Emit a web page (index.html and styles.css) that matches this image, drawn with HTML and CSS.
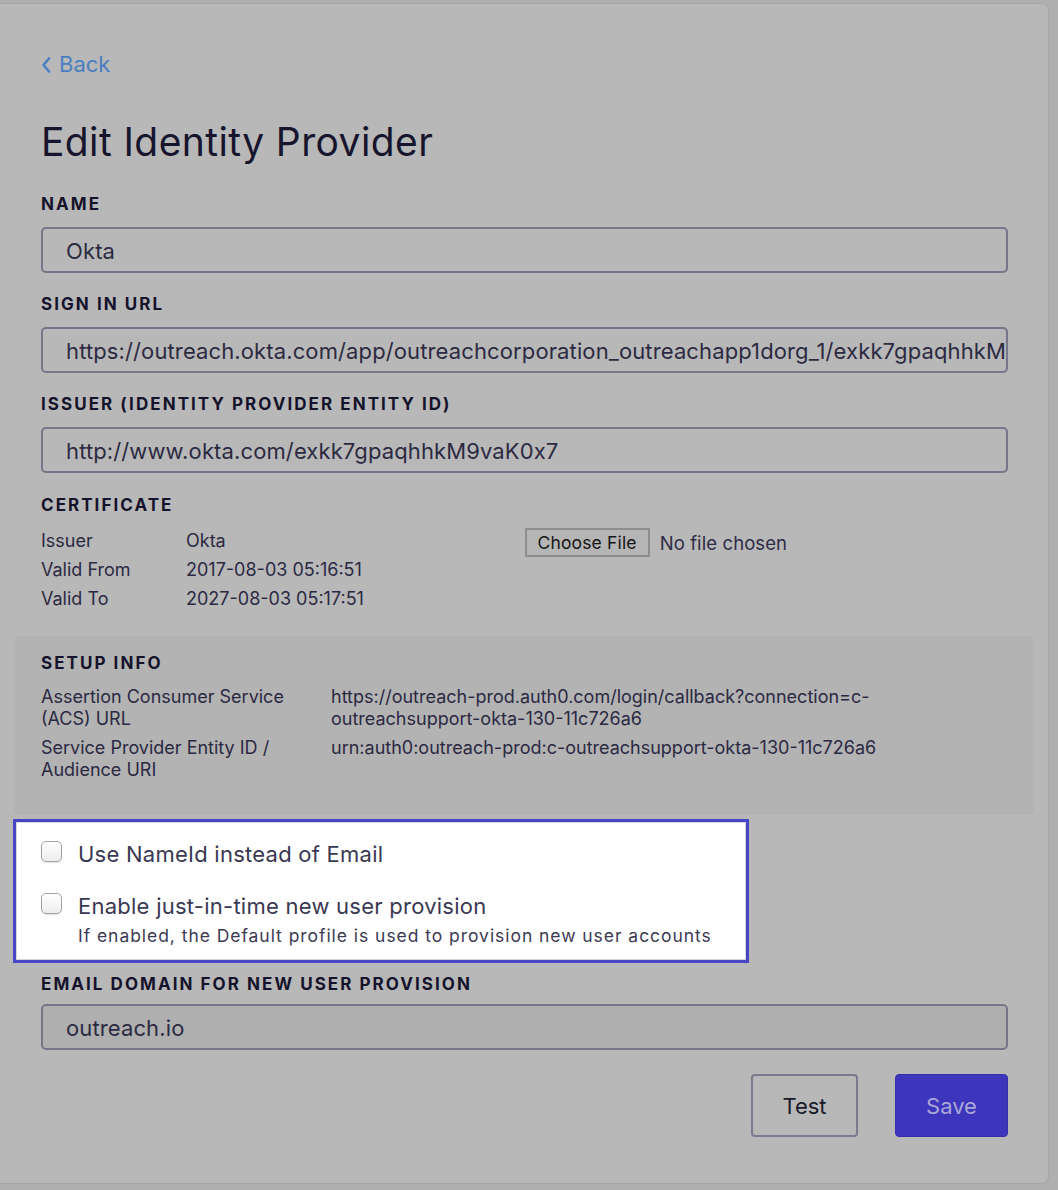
FILE: index.html
```html
<!DOCTYPE html>
<html lang="en">
<head>
<meta charset="utf-8">
<title>Edit Identity Provider</title>
<link rel="stylesheet" href="styles.css">
</head>
<body>
<div class="card">
  <a class="back" href="#">
    <svg class="back-icon" width="10" height="16" viewBox="0 0 10 16" aria-hidden="true"><path d="M8 1.5 L2.5 8 L8 14.5" fill="none" stroke="currentColor" stroke-width="2.6" stroke-linecap="round" stroke-linejoin="round"/></svg>
    <span>Back</span>
  </a>
  <h1 class="title">Edit Identity Provider</h1>

  <div class="field">
    <div class="label">NAME</div>
    <div class="input">Okta</div>
  </div>
  <div class="field">
    <div class="label">SIGN IN URL</div>
    <div class="input">https://outreach.okta.com/app/outreachcorporation_outreachapp1dorg_1/exkk7gpaqhhkM9vaK0x7/sso/saml</div>
  </div>
  <div class="field">
    <div class="label">ISSUER (IDENTITY PROVIDER ENTITY ID)</div>
    <div class="input">http://www.okta.com/exkk7gpaqhhkM9vaK0x7</div>
  </div>

  <section class="cert">
    <div class="label">CERTIFICATE</div>
    <div class="cert-grid">
      <div class="cert-info">
        <div class="cert-row"><span class="cert-key">Issuer</span><span>Okta</span></div>
        <div class="cert-row"><span class="cert-key">Valid From</span><span>2017-08-03 05:16:51</span></div>
        <div class="cert-row"><span class="cert-key">Valid To</span><span>2027-08-03 05:17:51</span></div>
      </div>
      <div class="file">
        <span class="file-btn">Choose File</span>
        <span class="file-text">No file chosen</span>
      </div>
    </div>
  </section>

  <section class="setup">
    <div class="label">SETUP INFO</div>
    <div class="setup-grid">
      <div class="setup-key">Assertion Consumer Service (ACS) URL</div>
      <div class="setup-val">https://outreach-prod.auth0.com/login/callback?connection=c-outreachsupport-okta-130-11c726a6</div>
      <div class="setup-key">Service Provider Entity ID / Audience URI</div>
      <div class="setup-val">urn:auth0:outreach-prod:c-outreachsupport-okta-130-11c726a6</div>
    </div>
  </section>

  <div class="highlight">
    <label class="check-row">
      <span class="checkbox"></span>
      <span class="check-text">Use NameId instead of Email</span>
    </label>
    <label class="check-row second">
      <span class="checkbox"></span>
      <span class="check-text">Enable just-in-time new user provision</span>
    </label>
    <div class="hint">If enabled, the Default profile is used to provision new user accounts</div>
  </div>

  <div class="field email">
    <div class="label">EMAIL DOMAIN FOR NEW USER PROVISION</div>
    <div class="input input-dim">outreach.io</div>
  </div>

  <div class="actions">
    <button class="btn btn-test" type="button">Test</button>
    <button class="btn btn-save" type="button">Save</button>
  </div>
</div>
</body>
</html>
```

FILE: styles.css
```css
* { box-sizing: border-box; }

html, body { height: 100%; }

body {
  margin: 0;
  padding: 3px 9px 0 0;
  background: #afafaf;
  font-family: Inter, "Noto Sans", "Liberation Sans", sans-serif;
  color: #2b2942;
  overflow: hidden;
}

.card {
  background: #b8b8b8;
  border: 1px solid #a6a6a6;
  border-left: none;
  border-radius: 0 7px 7px 0;
  padding: 48px 40px 46px 41px;
}

.back {
  display: flex;
  align-items: center;
  gap: 8px;
  color: #4a7ec2;
  text-decoration: none;
  font-size: 22px;
  line-height: 24px;
  height: 24px;
}

.back-icon { display: block; margin-top: 1px; }

.title {
  margin: 43px 0 0;
  font-size: 39px;
  line-height: 46px;
  font-weight: 400;
  color: #17152e;
  letter-spacing: 0.4px;
}

.label {
  font-size: 17px;
  line-height: 22px;
  font-weight: 700;
  letter-spacing: 2.05px;
  color: #15132b;
}

.field { margin-top: 20px; }
.title + .field { margin-top: 28px; }

.input {
  margin-top: 12px;
  height: 46px;
  border: 2px solid #76758a;
  border-radius: 5px;
  padding: 3px 0 0 23px;
  font-size: 22px;
  line-height: 38px;
  letter-spacing: 0.12px;
  color: #2c2a41;
  white-space: nowrap;
  overflow: hidden;
}

.input-dim { background: #afafaf; }

.cert { margin-top: 21px; }

.cert-grid {
  margin-top: 10px;
  display: grid;
  grid-template-columns: 1fr 1fr;
}

.cert-row {
  display: flex;
  font-size: 18px;
  line-height: 29px;
  height: 29px;
}

.cert-key { width: 145px; }

.file {
  display: flex;
  align-items: center;
  gap: 10px;
  height: 29px;
  margin-top: 2px;
}

.file-btn {
  height: 29px;
  padding: 0 11px;
  border: 2px solid #8e8e8e;
  background: #b5b5b5;
  color: #151515;
  font-size: 17.5px;
  line-height: 25px;
  letter-spacing: 0.15px;
}

.file-text {
  font-size: 18.5px;
  letter-spacing: 0.1px;
  color: #2e2c45;
}

.setup {
  margin: 23px -26px 0 -27px;
  padding: 16px 26px 34px 27px;
  background: #b3b3b3;
  border-radius: 5px;
}

.setup-grid {
  margin-top: 12px;
  display: grid;
  grid-template-columns: 260px 600px;
  column-gap: 30px;
  row-gap: 7px;
  font-size: 18px;
  line-height: 22px;
}

.highlight {
  margin: 4px 0 0 -28px;
  width: 736px;
  border: 3px solid #4747c6;
  background: #ffffff;
  box-shadow: inset 0 0 0 1px #d6d6d6;
  padding: 19px 20px 13px 25px;
}

.check-row {
  display: flex;
  align-items: flex-start;
  gap: 16px;
}

.check-row.second { margin-top: 26px; }

.checkbox {
  flex: none;
  width: 21px;
  height: 21px;
  border: 1px solid #a3a3a3;
  border-radius: 5px;
  background: linear-gradient(#ffffff, #ededed);
  box-shadow: 0 1px 1px rgba(0, 0, 0, 0.12);
}

.check-text {
  font-size: 22px;
  line-height: 26px;
  letter-spacing: 0.25px;
  color: #3a3852;
}

.hint {
  margin: 6px 0 0 37px;
  font-size: 17.5px;
  line-height: 22px;
  letter-spacing: 0.95px;
  color: #3c3a54;
}

.field.email { margin-top: 10px; }
.field.email .input { margin-top: 9px; }

.actions {
  margin-top: 24px;
  display: flex;
  justify-content: flex-end;
  gap: 37px;
}

.btn {
  height: 63px;
  border-radius: 4px;
  font-family: inherit;
  font-size: 22px;
  cursor: pointer;
}

.btn-test {
  width: 107px;
  border: 2px solid #7b7a8c;
  background: #b8b8b8;
  color: #1a1a2a;
}

.btn-save {
  width: 113px;
  border: 1px solid #3630a8;
  background: #3d36bd;
  color: #a9a7d7;
}
```
